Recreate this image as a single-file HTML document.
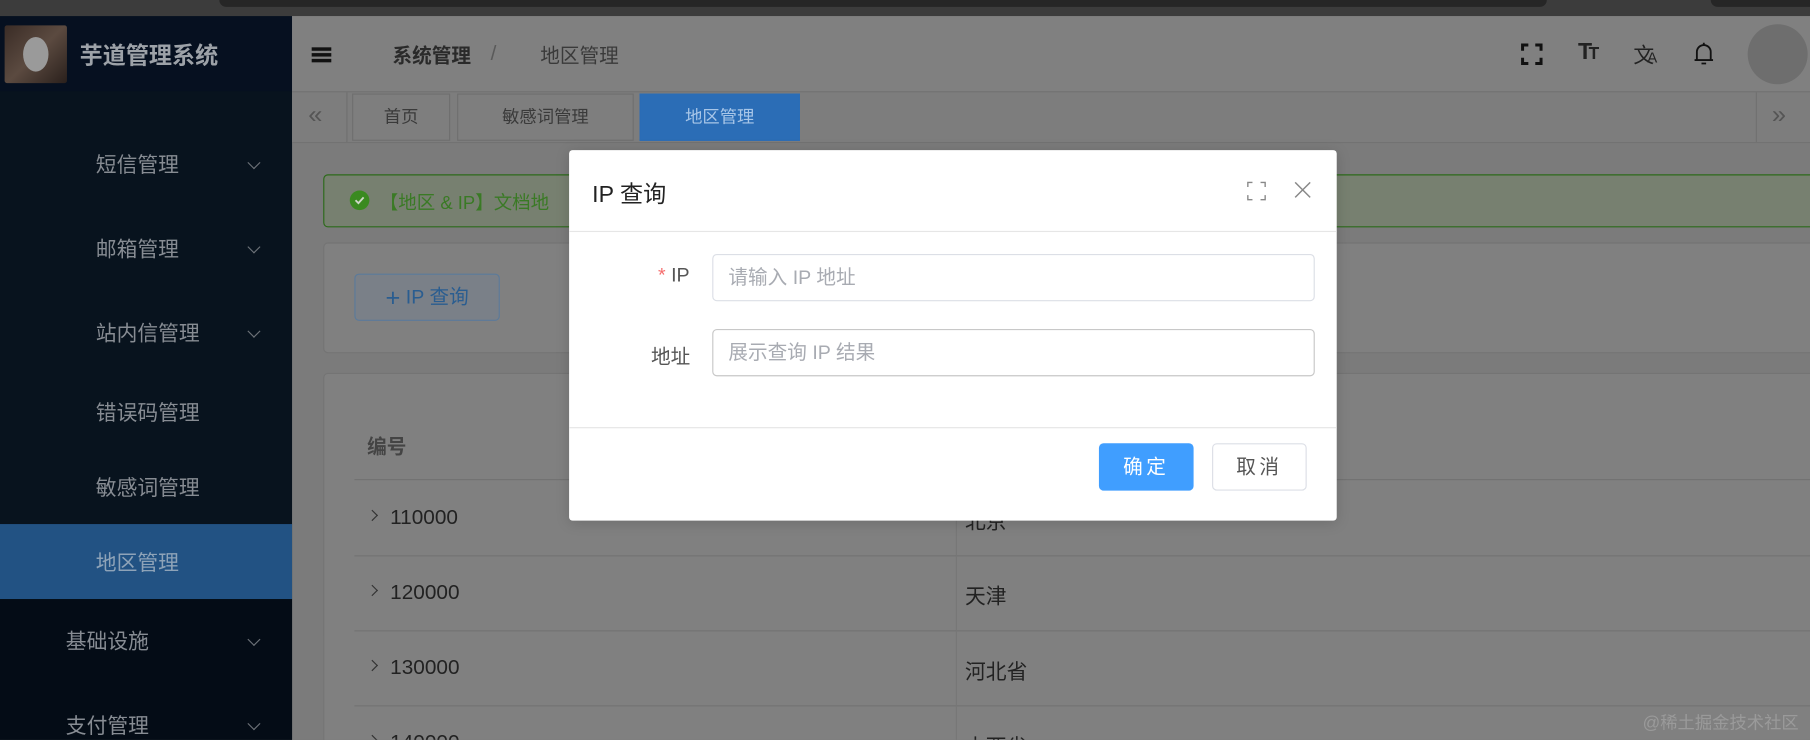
<!DOCTYPE html>
<html><head><meta charset="utf-8"><style>
html,body{margin:0;padding:0;width:1810px;height:740px;overflow:hidden;background:#7b7b7b}
#w{position:absolute;left:0;top:0;width:1568px;height:641px;transform:scale(1.15434);transform-origin:0 0;font-family:"Liberation Sans","Noto Sans CJK SC",sans-serif;overflow:hidden;background:#7b7b7b}
.a{position:absolute}
.mi{position:absolute;color:#878c93;font-size:18px}
.chev{position:absolute;width:7px;height:7px;border-right:1.3px solid #6d7278;border-bottom:1.3px solid #6d7278;transform:rotate(45deg)}
.tab{position:absolute;top:81px;height:39px;border:1px solid #6f6f6f;background:#7e7e7e;color:#3a3a3a;font-size:15px;line-height:39px;text-align:center}
.row{position:absolute;left:307px;width:1261px;height:1px;background:#727272}
.num{position:absolute;left:338px;font-size:18px;color:#222}
.rc{position:absolute;left:836px;font-size:18px;color:#222}
.rt{position:absolute;left:321px;width:6px;height:6px;border-right:1.3px solid #333;border-top:1.3px solid #333;transform:rotate(45deg)}
</style></head><body><div id="w">
<div class="a" style="left:0;top:0;width:1568px;height:14px;background:#3c3c3c"></div>
<div class="a" style="left:190px;top:0;width:1150px;height:6px;background:#262626;border-radius:0 0 8px 8px"></div>
<div class="a" style="left:1482px;top:0;width:90px;height:6px;background:#262626;border-radius:0 0 0 8px"></div>
<div class="a" style="left:0;top:14px;width:253px;height:627px;background:#08131e"></div>
<div class="a" style="left:0;top:14px;width:253px;height:65px;background:#061020"></div>
<div class="a" style="left:4px;top:22px;width:54px;height:50px;background:linear-gradient(135deg,#3a2c26,#5b4a40 50%,#2a201c);border-radius:2px"></div>
<div class="a" style="left:20px;top:32px;width:22px;height:30px;background:#9a9a9a;border-radius:50%"></div>
<div class="a" style="left:69px;top:32px;font-size:20px;font-weight:bold;color:#9da2a8">芋道管理系统</div>
<div class="mi" style="left:83px;top:129px">短信管理</div><div class="chev" style="left:216px;top:137px"></div>
<div class="mi" style="left:83px;top:202px">邮箱管理</div><div class="chev" style="left:216px;top:210px"></div>
<div class="mi" style="left:83px;top:275px">站内信管理</div><div class="chev" style="left:216px;top:283px"></div>
<div class="mi" style="left:83px;top:344px">错误码管理</div>
<div class="mi" style="left:83px;top:409px">敏感词管理</div>
<div class="a" style="left:0;top:454px;width:253px;height:65px;background:#225283"></div>
<div class="mi" style="left:83px;top:474px;color:#8ea3b8">地区管理</div>
<div class="a" style="left:0;top:519px;width:253px;height:122px;background:#040c16"></div>
<div class="mi" style="left:57px;top:542px">基础设施</div><div class="chev" style="left:216px;top:550px"></div>
<div class="mi" style="left:57px;top:615px">支付管理</div><div class="chev" style="left:216px;top:623px"></div>
<div class="a" style="left:253px;top:14px;width:1315px;height:65px;background:#808080"></div>
<div class="a" style="left:270px;top:41px;width:17px;height:3px;background:#111;box-shadow:0 5px 0 #111,0 10px 0 #111"></div>
<div class="a" style="left:340px;top:34px;font-size:17px;font-weight:bold;color:#2a2a2a">系统管理</div>
<div class="a" style="left:425px;top:36px;font-size:18px;color:#5a5a5a">/</div>
<div class="a" style="left:468px;top:34px;font-size:17px;color:#3a3a3a">地区管理</div>
<svg class="a" style="left:1317px;top:37px" width="20" height="20" viewBox="0 0 20 20" fill="none" stroke="#111" stroke-width="2.6"><path d="M2 7V2h5M13 2h5v5M18 13v5h-5M7 18H2v-5"/></svg>
<div class="a" style="left:1367px;top:34px;font-size:20px;font-weight:bold;color:#222;letter-spacing:-3px">T<span style="font-size:15px">T</span></div>
<div class="a" style="left:1415px;top:34px;font-size:18px;color:#222">文<span style="font-size:13px;margin-left:-6px">A</span></div>
<svg class="a" style="left:1465px;top:35px" width="22" height="24" viewBox="0 0 22 24" fill="none" stroke="#111" stroke-width="1.6"><path d="M11 2v2M5 17V10a6 6 0 0112 0v7M3 17h16M9 20h4"/></svg>
<div class="a" style="left:1514px;top:21px;width:52px;height:52px;border-radius:50%;background:#6e6e6e"></div>
<div class="a" style="left:253px;top:79px;width:1315px;height:45px;background:#7d7d7d;border-top:1px solid #727272;border-bottom:1px solid #727272;box-sizing:border-box"></div>
<div class="a" style="left:267px;top:86px;font-size:22px;color:#555">«</div>
<div class="a" style="left:300px;top:80px;width:1px;height:43px;background:#707070"></div>
<div class="tab" style="left:305px;width:83px">首页</div>
<div class="tab" style="left:396px;width:151px">敏感词管理</div>
<div class="tab" style="left:554px;width:137px;background:#2b6db6;border-color:#2b6db6;color:#a8c6e8">地区管理</div>
<div class="a" style="left:1521px;top:80px;width:1px;height:43px;background:#707070"></div>
<div class="a" style="left:1535px;top:86px;font-size:22px;color:#555">»</div>
<div class="a" style="left:280px;top:151px;width:1300px;height:44px;border:1px solid #2c6a1a;border-radius:4px;background:#778070"></div>
<div class="a" style="left:303px;top:165px;width:17px;height:17px;border-radius:50%;background:#3a8a20"></div>
<svg class="a" style="left:303px;top:165px" width="17" height="17" viewBox="0 0 17 17" fill="none" stroke="#cfd8c8" stroke-width="1.6"><path d="M5 8.5l2.5 2.5 4.5-5"/></svg>
<div class="a" style="left:329px;top:162px;font-size:16px;color:#3a7a25">【地区 &amp; IP】文档地</div>
<div class="a" style="left:280px;top:210px;width:1300px;height:94px;border:1px solid #747474;border-radius:4px;background:#808080"></div>
<div class="a" style="left:307px;top:237px;width:124px;height:39px;border:1px solid #5b7a9a;border-radius:4px;background:#7a8088;color:#2a5d90;font-size:17px;line-height:39px;text-align:center"><span style="font-size:22px;vertical-align:-2px">+</span> IP 查询</div>
<div class="a" style="left:280px;top:323px;width:1300px;height:330px;border:1px solid #747474;border-radius:4px;background:#808080"></div>
<div class="a" style="left:318px;top:373px;font-size:17px;font-weight:bold;color:#444">编号</div>
<div class="row" style="top:415px"></div>
<div class="row" style="top:481px"></div>
<div class="row" style="top:546px"></div>
<div class="row" style="top:611px"></div>
<div class="a" style="left:828px;top:415px;width:1px;height:230px;background:#777"></div>
<div class="rt" style="left:319px;top:443px"></div><div class="num" style="top:438px">110000</div>
<div class="rt" style="left:319px;top:508px"></div><div class="num" style="top:503px">120000</div>
<div class="rt" style="left:319px;top:573px"></div><div class="num" style="top:568px">130000</div>
<div class="rt" style="left:319px;top:638px"></div><div class="num" style="top:633px">140000</div>
<div class="rc" style="top:438px">北京</div>
<div class="rc" style="top:503px">天津</div>
<div class="rc" style="top:568px">河北省</div>
<div class="rc" style="top:633px">山西省</div>
<div class="a" style="left:1423px;top:615px;font-size:15px;color:#9a9a9a">@稀土掘金技术社区</div>
<div class="a" style="left:493px;top:130px;width:665px;height:321px;background:#fff;border-radius:3px;box-shadow:0 2px 12px rgba(0,0,0,.15)">
  <div class="a" style="left:20px;top:22px;font-size:20px;color:#222">IP 查询</div>
  <svg class="a" style="left:587px;top:27px" width="17" height="17" viewBox="0 0 17 17" fill="none" stroke="#888" stroke-width="1.2"><path d="M1 5V1h4M12 1h4v4M16 12v4h-4M5 16H1v-4"/></svg>
  <svg class="a" style="left:628px;top:27px" width="15" height="15" viewBox="0 0 15 15" stroke="#888" stroke-width="1.3"><path d="M1 1l13 13M14 1L1 14"/></svg>
  <div class="a" style="left:0;top:70px;width:665px;height:1px;background:#e6e6e6"></div>
  <div class="a" style="left:77px;top:99px;font-size:17px;color:#555"><span style="color:#f56c6c">*</span> IP</div>
  <div class="a" style="left:124px;top:90px;width:522px;height:41px;border:1px solid #dcdfe6;border-radius:4px;box-sizing:border-box;padding-left:13px;line-height:39px;font-size:17px;color:#a8abb2">请输入 IP 地址</div>
  <div class="a" style="left:71px;top:165px;font-size:17px;color:#555">地址</div>
  <div class="a" style="left:124px;top:155px;width:522px;height:41px;border:1px solid #c8c8c8;border-radius:4px;box-sizing:border-box;padding-left:13px;line-height:39px;font-size:17px;color:#a8abb2">展示查询 IP 结果</div>
  <div class="a" style="left:0;top:240px;width:665px;height:1px;background:#e6e6e6"></div>
  <div class="a" style="left:459px;top:254px;width:82px;height:41px;background:#409eff;border-radius:4px;color:#fff;font-size:17px;line-height:41px;text-align:center;letter-spacing:3px">确定</div>
  <div class="a" style="left:557px;top:254px;width:82px;height:41px;border:1px solid #dcdfe6;box-sizing:border-box;border-radius:4px;color:#555;font-size:17px;line-height:39px;text-align:center;letter-spacing:3px">取消</div>
</div>
</div></body></html>
